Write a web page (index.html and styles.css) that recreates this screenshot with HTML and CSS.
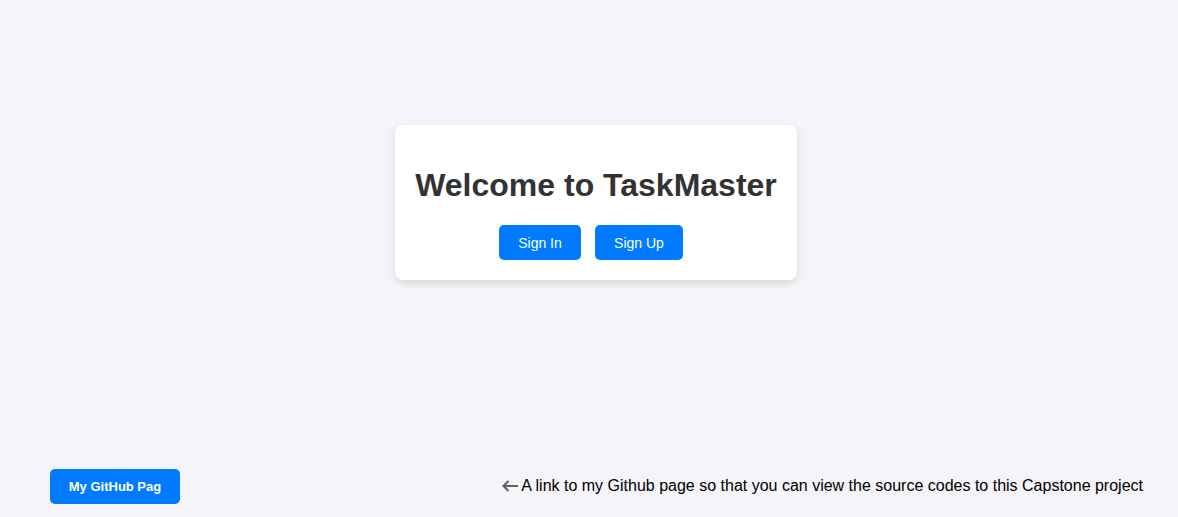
FILE: index.html
```html
<!DOCTYPE html>
<html lang="en">
<head>
<meta charset="utf-8">
<title>TaskMaster</title>
<link rel="stylesheet" href="styles.css">
</head>
<body>
<div class="page">
  <main class="main">
    <div class="card">
      <h1 class="title">Welcome to TaskMaster</h1>
      <div class="actions">
        <button class="btn btn-signin">Sign In</button>
        <button class="btn btn-signup">Sign Up</button>
      </div>
    </div>
  </main>
  <footer class="footer">
    <button class="btn btn-github">My GitHub Pag</button>
    <p class="note"><svg class="arrow" width="16" height="12" viewBox="0 0 16 12" aria-hidden="true"><path d="M16 6H1.5M6.5 1L1.5 6l5 5" fill="none" stroke="#5f5f66" stroke-width="2"/></svg> A link to my Github page so that you can view the source codes to this Capstone project</p>
  </footer>
</div>
</body>
</html>
```
FILE: styles.css
```css
* { box-sizing: border-box; }
html, body { margin: 0; padding: 0; }
body {
  background: #f4f4f9;
  font-family: "Liberation Sans", Arial, sans-serif;
  color: #000;
}
.page {
  height: 517px;
  display: flex;
  flex-direction: column;
}
.main {
  flex: 1;
  display: flex;
  justify-content: center;
  align-items: flex-start;
  padding: 125px 0 0 14px;
}
.card {
  background: #fff;
  border-radius: 8px;
  box-shadow: 0 3px 8px rgba(0, 0, 0, 0.13);
  padding: 20px 20px;
  text-align: center;
  width: 402px;
}
.title {
  margin: 22px 0 0;
  font-size: 32px;
  line-height: 37px;
  font-weight: bold;
  color: #333;
  white-space: nowrap;
}
.actions {
  display: flex;
  justify-content: center;
  gap: 14px;
  margin-top: 21px;
  padding-right: 10px;
}
.btn {
  font-family: "Liberation Sans", Arial, sans-serif;
  background: #007bff;
  color: #fff;
  border: none;
  border-radius: 5px;
  height: 35px;
  font-size: 14px;
  padding: 0;
  cursor: pointer;
}
.btn-signin { width: 82px; }
.btn-signup { width: 88px; }
.btn-github {
  width: 130px;
  font-size: 13px;
  font-weight: bold;
}
.footer {
  display: flex;
  align-items: center;
  justify-content: space-between;
  padding: 0 35px 13px 50px;
}
.note {
  margin: 0 0 2px;
  font-size: 16px;
  color: #000;
}
.arrow {
  vertical-align: -1px;
}
```
